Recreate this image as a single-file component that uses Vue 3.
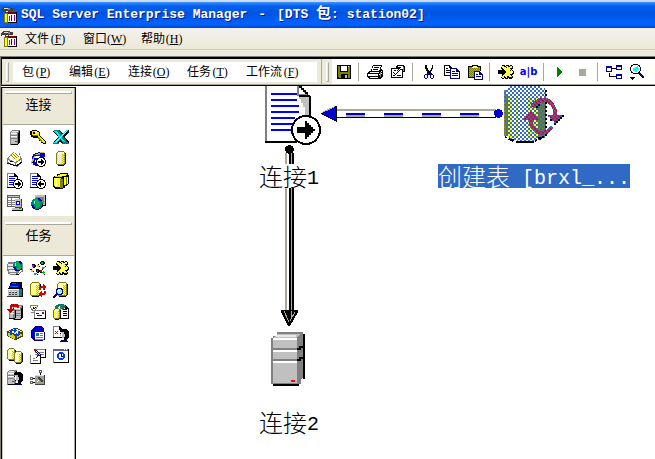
<script setup>
import { h } from 'vue'

// Layer helpers for the 16-unit pixel icons
const F = (fill, d) => ({ fill, d })
const S = (stroke, d, w = 1) => ({ fill: 'none', stroke, d, 'stroke-width': w })
const R = (fill, x, y, w, hh) => F(fill, `M${x} ${y}h${w}v${hh}h${-w}z`)

const dots = (c, x, y, w, hh) => {
  let d = ''
  for (let j = 0; j < hh; j++) for (let i = j % 2; i < w; i += 2) d += `M${x + i} ${y + j}h1v1h-1z`
  return F(c, d)
}
const cyl = (x, y, w, hh, pale) => [
  F('#808000', `M${x + 2} ${y}h${w - 4}v1h1v1h1v${hh - 4}h-1v1h-1v1h${4 - w}v-1h-1v-1h-1v${4 - hh}h1v-1h1z`),
  R(pale ? '#ffff80' : '#ffff00', x + 1, y + 2, w - 3, hh - 4),
  R('#ffffcc', x + 2, y + 1, w - 4, 2),
  dots('#ffffff', x + 2, y + 3, Math.floor(w / 2) - 2, hh - 5),
  dots('#c8b800', x + Math.floor(w / 2) + 1, y + 3, Math.floor(w / 2) - 2, hh - 5),
  S('#000', `M${x + w - 0.5} ${y + 2}v${hh - 4}M${x + 2} ${y + hh - 0.5}h${w - 4}M${x + w - 2} ${y + hh - 1.5}h1`),
]
const server = (x, y) => [
  F('#808080', `M${x + 2} ${y}h8v13h-1v1h-1v1h-8v-13h1v-1h1z`),
  R('#c0c0c0', x + 1, y + 2, 6, 12),
  R('#e8e8e8', x + 2, y + 1, 6, 1),
  F('#fff', `M${x + 1} ${y + 3}h6v1h-6zM${x + 1} ${y + 6}h6v1h-6z`),
  F('#808080', `M${x + 1} ${y + 5}h6v1h-6zM${x + 1} ${y + 8}h6v1h-6z`),
  F('#000', `M${x + 9} ${y + 1}h1v12h-1v1h-1v-11h1zM${x + 1} ${y + 14}h7v1h-7z`),
  R('#f00', x + 5, y + 11, 2, 1),
]
const page = (x, y, w = 10, hh = 14) => [
  F('#fff', `M${x} ${y}h${w - 3}l3 3v${hh - 3}h${-w}z`),
  F('#808080', `M${x} ${y}h${w - 3}v1h${4 - w}v${hh - 1}h-1z`),
  F('#000', `M${x + w - 4} ${y}h1v1h1v1h1v1h1v${hh - 3}h${-w}v-1h${w - 1}v${5 - hh}h-3z`),
]
const disc = (left) => [
  F('#000', 'M9 6h4v1h2v2h1v4h-1v2h-2v1h-4v-1h-2v-2h-1v-4h1v-2h2z'),
  F('#fff', 'M9 7h4v1h1v1h1v4h-1v1h-1v1h-4v-1h-1v-1h-1v-4h1v-1h1z'),
  F('#000', left ? 'M14 10h-3v-2h-1v1h-1v1h-1v2h1v1h1v1h1v-2h3z' : 'M8 10h3v-2h1v1h1v1h1v2h-1v1h-1v1h-1v-2h-3z'),
]
const textLines = S('#00f', 'M2 3.5h5M2 5.5h6M2 7.5h5M2 9.5h4M2 11.5h4')
const gear = [
  F('#000', 'M4 1h3v1h1v-1h3v1h1v-1h2v1h1v3h-1v1h1v1h1v3h-1v1h-1v1h1v2h-1v1h-3v-1h-1v1h-3v-1h-1v1h-2v-1h-1v-3h1v-6h-1v-3h1z'),
  F('#ffff40', 'M4 2h2v1h2v-1h2v1h2v-1h2v2h-1v2h1v1h1v2h-1v1h-1v2h1v1h-3v-1h-2v2h-1v-2h-2v2h-2v-1h-1v-2h1v-8h-1v-1h1z'),
  F('#fff', 'M7 4h1v1h-1zM9 4h1v1h-1zM11 5h1v1h-1zM10 7h1v1h-1zM12 8h1v1h-1zM11 10h1v1h-1zM9 11h1v1h-1zM7 12h1v1h-1z'),
  F('#000', 'M8 3h1v1h-1zM12 4h1v1h-1zM12 6h1v1h-1zM12 10h1v1h-1zM9 12h1v1h-1z'),
  F('#000', 'M0 6h4v-2h1v1h1v1h1v1h1v2h-1v1h-1v1h-1v1h-1v-2h-4z'),
]
const face = (x, y) => [
  F('#000', `M${x + 1} ${y}h5l3 2v6l-2 2v2h1v1h-7v-2l2-1v-1h-2v-2h-1v-2l1-2h-1v-2z`),
  F('#c0c0c0', `M${x + 1} ${y + 3}h3v2h1v3h-1v2h-2v-2h-1v-1h-1v-2h1z`),
  F('#fff', `M${x + 1} ${y + 4}h1v4h-1zM${x + 2} ${y + 9}h2v2h-2z`),
  F('#000080', `M${x + 1} ${y + 11}h5v1h2v1h-8v-1h1z`),
]
const globe = (x, y, r) => [
  F('#008080', `M${x - r} ${y}a${r} ${r} 0 1 0 ${2 * r} 0a${r} ${r} 0 1 0 ${-2 * r} 0`),
  F('#0000c0', `M${x - r} ${y + 1}h3l1 4h-2zM${x + 1} ${y - r}h2l2 3h-3z`),
  F('#00b050', `M${x - 2} ${y - r + 1}h3v2l2 1v3l-2 3h-2v-4l-2-2z`),
  F('#a0e0e0', `M${x - 3} ${y - 3}h1v3h-1z`),
  S('#000', `M${x + r - 0.5} ${y}q0 ${r - 1} ${-r} ${r - 0.5}`),
]

const icons = {
  server: server(3, 1),
  key: [
    F('#000', 'M2 1h5v1h2v1h1v4h1v1h1v1h1v1h1v1h1v1h1v3h-3v-1h-2v-2h-2v-2h-1v-1h-5v-1h-2v-2h-1v-4h1z'),
    F('#ffe800', 'M2 2h5v1h2v4h1v1h1v1h1v1h1v1h1v1h1v2h-2v-1h-1v-2h-2v-2h-2v-2h-4v-1h-2v-4h1z'),
    R('#000', 3, 3, 2, 2), F('#ffff99', 'M5 2h2v1h1v1h-3z'), F('#808000', 'M3 6h5v1h-5zM8 8h1v1h1v1h1v1h1v2h-1v-1h-1v-1h-1v-1h-1z'),
  ],
  excel: [
    F('#000', 'M1 1h6l3 4 3-4h3v2l-5 5 5 5v2h-7l-2-3-2 3h-5v-2l5-5-5-5z'),
    F('#008080', 'M1 1h5l9 13h-5z'),
    F('#00e8e8', 'M1 2h3l8 11h-2zM13 1h2l-11 13h-4v-1h2z'),
    F('#fff', 'M13 2h1l-11 11h-1z'), R('#008080', 0, 14, 6, 1), R('#008080', 9, 14, 7, 1),
  ],
  cards: [
    F('#808080', 'M2 5l4-4h6l3 7v4l-5 4-10-4v-5z'),
    F('#fff', 'M3 5l4-4h5l1 6-5 4-6-3z'), F('#ffff66', 'M4 4l3-2 3 4 3 1-3 3-5-2z'),
    S('#808080', 'M4 4l4 4M6 3l4 4M8 2l4 4M1 8l7 4'),
    F('#fff', 'M1 9l7 3v2l-7-3zM9 12l5-3v2l-5 4z'), R('#000', 3, 10, 3, 1),
    S('#000', 'M0 12l9 3 6-4'),
  ],
  ie: [
    F('#0000d0', 'M5 2h3v-1h6v1h1v4h-1v2h-2v6h-1v1h-6v-1h-2v-2h-1v-7h1v-2h2z'),
    F('#fff', 'M6 5h4v1h1v1h-6v-1h1zM5 9h4v3h-3v-1h-1z'), F('#00a0ff', 'M5 3h5v1h-5zM3 6h1v4h-1z'),
    F('#e0c000', 'M0 12h1v-2h1v-2h1v-1h1v-2h2v-2h2v-1h2v-1h4v1h-4v1h-2v1h-2v2h-1v1h-1v2h-1v2h-1v2h-1z'),
    ...disc(false),
  ],
  cylinder: cyl(3, 0, 10, 15),
  docOut: [...page(0, 0, 11, 15), textLines, ...disc(false)],
  docIn: [...page(0, 0, 11, 15), textLines, ...disc(true)],
  cylinders: [
    F('#000', 'M7 0h8v2h1v9h-1v1h-1v1h-2v2h-2v1h-8v-1h-1v-1h-1v-10h1v-1h3v-2h2z'),
    F('#ffff00', 'M7 1h7v1h-1v1h-8v-1h2zM1 5h7v9h-6v-1h-1zM11 4h4v7h-2v1h-2z'), F('#808000', 'M7 6h3v9h-3zM13 4h1v7h-1z'),
    F('#ffffcc', 'M2 5h2v8h-2zM8 2h4v1h-4z'), R('#e8d800', 2, 3, 7, 1),
  ],
  tablePc: [
    R('#606060', 0, 0, 13, 12), R('#fff', 1, 3, 11, 8), R('#c0c0c0', 1, 1, 11, 1),
    F('#808080', 'M1 5h11v1h-11zM1 7h11v1h-11zM1 9h11v1h-11zM4 3h1v8h-1z'),
    R('#404040', 8, 4, 7, 9), R('#c0c0c0', 8, 4, 6, 8), R('#00f', 9, 6, 4, 4), R('#fff', 10, 7, 2, 2),
    R('#c0c0c0', 5, 13, 10, 2), F('#000', 'M5 15h10v-2h1v3h-11z'), R('#0a0', 12, 13, 2, 1),
  ],
  webPc: [R('#000', 5, 0, 11, 11), R('#c0c0c0', 5, 0, 10, 10), R('#808080', 6, 2, 8, 7), ...globe(7, 9, 6)],
  ftp: [
    F('#808080', 'M1 2h9v3h3v6h-1v2h-1v2h-8v-1h-2v-3h-1v-7h1z'),
    F('#e8e8e8', 'M1 4h7v2h-7zM1 7h8v2h-8zM2 10h7v2h-7zM3 13h6v1h-6z'), ...globe(11, 6, 5),
    S('#808080', 'M15.5 3v8l-5 4'), R('#000', 9, 14, 3, 1),
  ],
  scatter: [
    F('#000', 'M11 1h3v1h1v2h-1v1h-3v-1h-1v-2h1zM2 4h3v1h1v2h-1v1h-2v-1h-1zM6 9h3v1h1v2h-1v1h-2v-1h-1z'),
    F('#0b0', 'M11 2h2v2h-2zM13 11h1v1h1v1h-1v1h-1v-1h-1v-1h1z'), F('#c0f', 'M2 5h2v2h-2zM7 10h1v2h-1z'),
    F('#e0d800', 'M7 5h2v2h-2zM1 10h2v2h-2z'), F('#00a0a0', 'M12 7h3v1h-1v1h-2zM4 13h3v1h-1v1h-2z'), F('#c00', 'M10 10h2v2h-2z'),
    F('#000', 'M8 4h1v1h-1zM9 6h1v1h-1zM15 6h1v1h-1zM0 9h2v1h-2zM3 11h1v1h-1zM12 9h1v1h-1zM7 14h1v1h-1zM14 14h1v1h-1zM10 12h2v1h-2z'),
  ],
  gear,
  calc: [
    F('#000', 'M4 0h11v6h1v9h-15v-9h1z'), F('#0000c0', 'M4 1h10l-2 5h-10z'), F('#0060ff', 'M5 1h4v1h-4zM3 4h8v1h-8z'),
    R('#c0c0c0', 1, 7, 11, 7), F('#fff', 'M1 7h11v1h-11zM2 9h1v1h-1zM5 9h1v1h-1zM8 9h1v1h-1z'),
    F('#404040', 'M2 10h2v1h-2zM5 10h2v1h-2zM8 10h2v1h-2zM2 12h2v1h-2zM5 12h2v1h-2zM8 12h2v1h-2zM0 14h12v1h-12z'),
    R('#008080', 12, 7, 3, 7),
  ],
  cylLoop: [
    ...cyl(0, 0, 11, 15, true), F('#fff', 'M9 6h5v7h-5z'),
    F('#e00000', 'M9 5h2v-1h2v-2h1v1h1v1h1v2h-1v1h-1v1h-1v-2h-2v2h-2zM15 9h-1v2h-2v-2h-1v1h-1v1h-1v2h1v1h1v1h1v-2h3v-1h1v-3z'),
    F('#400', 'M14 7h1v1h-1zM9 13h1v1h-1z'),
  ],
  cylFind: [
    ...cyl(4, 0, 11, 15, true), F('#000080', 'M4 6h4l2 2v3l-2 2h-3l-4 3h-1v-2l3-3v-4z'),
    F('#80ffff', 'M5 7h2l2 2v1l-2 2h-2l-1-2v-2z'), R('#fff', 5, 8, 2, 1), R('#00f', 1, 13, 2, 1),
  ],
  serverMove: [
    ...server(6, 1).slice(0, 6), F('#808080', 'M2 5h6v10h-5l-1-2z'), R('#c0c0c0', 3, 6, 3, 8),
    S('#fff', 'M3 7.5h4M3 9.5h4'), S('#000', 'M2 14.5h6M8.5 6v8'), R('#c0c0c0', 9, 7, 5, 6), S('#808080', 'M9 9.5h5M9 11.5h5'),
    F('#c00', 'M3 1l2-1h5l2 2v2h-2l-1-1h-4v2h2l-4 4-3-4h3v-2z'), F('#600', 'M6 4h1l-4 4v-1z'),
  ],
  mail: [
    F('#808080', 'M0 1h8v2h-1v2h-1v2h-4v-1h-1v-2h-1z'), F('#ffffcc', 'M1 2h6v1h-1v2h-1v1h-2v-1h-1v-1h-1z'), F('#000', 'M3 3h1v1h1v-1h1v1h-1v1h-2z'),
    R('#000', 4, 7, 12, 8), R('#fff', 4, 7, 11, 7), F('#808080', 'M4 6h12v1h-11v7h-1z'),
    S('#00f', 'M6 9.5h3M7 11.5h5'), R('#c00', 12, 8, 2, 2), S('#808080', 'M1 8.5h3'),
  ],
  cylDoc: [
    ...page(7, 1, 9, 14), S('#000', 'M10 5.5h4M10 7.5h4M10 9.5h4M10 11.5h4'), ...cyl(0, 4, 8, 12),
    F('#008060', 'M3 1l3-1h5v2h2l-3 4-4-3h2v-1h-2l-3 3h-1v-2z'),
  ],
  boxLoop: [
    F('#404000', 'M6 2h5v1h2v1h2v1h1v6h-2v1h-2v1h-2v1h-3v-1h-2v-1h-2v-1h-2v-1h-1v-5h2v-1h2v-1h2z'),
    F('#ffff66', 'M6 3h5v1h2v1h2v1h-2v1h-2v1h-4v-1h-3v-1h-2v-1h2v-1h2z'), F('#e0d000', 'M1 7h2v1h3v1h2v4h-2v-1h-2v-1h-2v-1h-1zM9 9h3v-1h3v2h-2v1h-2v1h-2z'),
    dots('#fff', 4, 4, 9, 3),
    F('#0040ff', 'M3 9v-4h1v-1h3v-2h1v1h1v1h1v1h-1v1h-1v1h-1v-2h-2v4zM13 5v4h-1v1h-2v2h-1v-1h-1v-1h-1v-1h1v-1h1v-1h1v1h1v-3z'),
  ],
  blueHead: [
    F('#000080', 'M2 3l3-3h6l3 3v3h1v8h-2v1h-9l-3-4v-5z'), F('#0000d0', 'M3 3l3-2h5l2 2v2h-8v6h-3v-5z'),
    R('#fff', 5, 6, 9, 7), R('#008080', 6, 7, 3, 3), S('#00a0ff', 'M10 7.5h3M10 9.5h3M6 11.5h7'), S('#808080', 'M5 13.5h9'),
  ],
  docFace: [...page(0, 0, 10, 12), F('#c00', 'M2 5h1v1h1v-1h1v1h-1v1h1v1h-1v-1h-1v1h-1v-1h1v-1h-1z'), ...face(7, 3)],
  twoCyl: [...cyl(0, 0, 9, 13, true), ...cyl(7, 3, 9, 13, true)],
  notepad: [
    R('#000', 4, 1, 12, 9), R('#fff', 4, 1, 11, 8), F('#808080', 'M4 1h11v1h-11zM5 4h9v1h-9zM5 6h9v1h-9z'),
    R('#000', 1, 7, 10, 9), R('#fff', 1, 7, 9, 8), F('#808080', 'M0 7h1v9h-1zM3 10h2v1h-2zM3 12h5v1h-5z'),
    S('#000', 'M5 2l6 6', 2), S('#ffe000', 'M6 3l4 4', 1.4), F('#c00', 'M4 1h2v2h-2z'), S('#00f', 'M6 10l4-5'),
  ],
  schedule: [
    R('#000', 0, 1, 16, 14), R('#fff', 1, 3, 14, 11), R('#606090', 0, 1, 15, 2), F('#fff', 'M11 1h1v1h-1zM13 1h1v1h-1z'),
    F('#808080', 'M0 3h1v12h-1z'), F('#0040e0', 'M6 4h4v1h1v1h1v4h-1v1h-1v1h-4v-1h-1v-1h-1v-4h1v-1h1z'), F('#fff', 'M6 6h4v4h-4z'), F('#0000c0', 'M8 6h1v2h1v1h-2z'),
  ],
  serverFace: [...server(0, 0), S('#808080', 'M8 0v14', 2), ...face(7, 2)],
  process: [
    R('#404040', 5, 5, 10, 10), R('#a0a088', 5, 5, 9, 9), R('#e0e0d0', 5, 5, 9, 1), F('#404040', 'M8 7h2v1h1v1h1v1h1v2h-2v-1h-1v-1h-1v-1h-1z'), S('#fff', 'M7 12l2-2'),
    S('#000', 'M10.5 2v3M1 8.5h4M1 12.5h4'), F('#606060', 'M9 0h3v3h-3zM0 7h3v3h-3zM0 11h3v3h-3z'), F('#fff', 'M10 1h1v1h-1zM1 8h1v1h-1zM1 12h1v1h-1z'),
  ],
  save: [
    R('#000', 1, 1, 14, 14), F('#808000', 'M2 2h2v6h8v-6h2v12h-2v-4h-7v4h-2l-1-1z'), R('#fff', 5, 2, 6, 5), R('#c0c0c0', 9, 11, 2, 3), R('#fff', 12, 2, 1, 1),
  ],
  print: [
    F('#000', 'M6 1h9v1l-1 3h1v1h1v6l-3 3h-11l-2-2v-4l2-2h2z'), F('#fff', 'M6 2h8l-2 5h-7z'),
    S('#000', 'M7 3.5h5M6 5.5h5'), F('#fff', 'M3 8h9l-1 1h-9zM1 10h10v2h-10zM3 13h8v1h-8z'), F('#808080', 'M13 8h1v5h-1z'), R('#ff0', 8, 11, 2, 1),
    F('#fff', 'M14 7h1v1h-1zM12 10h1v1h-1zM14 9h1v1h-1z'),
  ],
  props: [
    R('#000', 1, 4, 12, 10), R('#fff', 2, 5, 10, 8), F('#000', 'M3 8h1v1h1v1h1v-1h1v-1h1v1h-1v1h-1v1h-1v-1h-1v-1h-1zM4 6h2v1h-2zM7 11h4v1h-4zM3 11h2v1h-2z'),
    F('#000', 'M7 1h7l1 2v5h-2v-2h-2l-3 2-1-2 2-2h-3v-2z'), F('#fff', 'M8 2h4l1 1v2h-3l-2 2v-1l3-3h-4z'), F('#808080', 'M13 3h1v4h-1z'),
  ],
  cut: [
    F('#000', 'M5 1h1v3h1v2h1v1h1v-1h1v-2h1v-3h1v4h-1v2h-1v2h-1v1h-2v-1h-1v-2h-1v-2h-1v-4z'),
    F('#000080', 'M6 9h2v1h1v-1h2v1h1v1h1v3h-1v1h-2v-1h-1v-3h-2v3h-1v1h-2v-1h-1v-3h1v-1h2zM4 11v3h2v-3zM10 11v3h2v-3z'),
  ].map((l) => ({ ...l, 'fill-rule': 'evenodd' })),
  copy: [
    F('#fff', 'M0 1h6l3 3v8h-9z'), F('#000', 'M0 1h6v1h1v1h1v1h-3v-2h-4v9h5v1h-6zM2 4h2v1h-2zM2 6h4v1h-4zM2 8h4v1h-4z'),
    F('#fff', 'M6 4h6l4 4v7h-10z'), F('#000080', 'M6 4h7v1h1v1h1v1h1v8h-10zM7 5v9h8v-6h-3v-3zM8 7h3v1h-3zM8 9h6v1h-6zM8 11h6v1h-6z'),
  ].map((l) => ({ ...l, 'fill-rule': 'evenodd' })),
  paste: [
    F('#000', 'M1 2h4v-1h6v1h3v12h-13z'), R('#808000', 2, 3, 11, 10), dots('#a8a868', 2, 4, 11, 9), F('#ffff80', 'M5 3h1v-1h4v1h1v1h-6z'),
    F('#fff', 'M7 7h6l3 3v6h-9z'), F('#000080', 'M7 7h6v1h1v1h1v1h1v6h-9zM8 8v7h7v-4h-3v-3zM9 10h2v1h-2zM9 12h5v1h-5z'),
  ].map((l) => ({ ...l, 'fill-rule': 'evenodd' })),
  play: [F('#008000', 'M5 3h1v1h1v1h1v1h1v1h1v2h-1v1h-1v1h-1v1h-1v1h-1z')],
  stop: [R('#aca899', 4, 5, 7, 7)],
  layout: [
    F('#0000a0', 'M0 2h6v6h-6zM1 4v3h4v-3zM10 1h6v5h-6zM11 3v2h4v-2zM10 10h6v5h-6zM11 12v2h4v-2z'),
    F('#000', 'M6 4h4v1h-4zM3 9h1v3h6v1h-7z'),
  ].map((l) => ({ ...l, 'fill-rule': 'evenodd' })),
  magnify: [
    S('#000080', 'M10 9l5 5', 2), F('#000', 'M4 0h5v1h2v2h1v4h-1v2h-2v1h-5v-1h-2v-2h-1v-4h1v-2h2z'), F('#fff', 'M4 1h5v1h1v1h1v4h-1v1h-1v1h-5v-1h-1v-1h-1v-4h1v-1h1z'),
    F('#00ffff', 'M4 4h2v-1h2v-1h1v2h1v2h-2v2h-2v-1h-2z'), F('#000', 'M1 13h5v1h-1v1h-1v1h-1v-1h-1v-1h-1z'),
  ],
  app: [
    F('#404040', 'M2 0h7v1h3v3h-4v2h-4v-2h-3l-1 1v-3z'), F('#e0e0e0', 'M3 1h6v1h-7v1h-1zM5 4h2v1h-2z'),
    F('#808080', 'M7 1h2v2h-2z'), R('#808000', 3, 6, 4, 10), R('#ffff00', 4, 7, 2, 8),
    R('#000', 7, 5, 9, 11), R('#800000', 7, 5, 8, 2), R('#fff', 7, 7, 8, 8), F('#f00', 'M8 9h1v5h-1z'), F('#00f', 'M10 8h1v6h-1z'), F('#808', 'M13 8h1v6h-1z'),
  ],
}

const PixelIcon = (props) =>
  h('svg', { viewBox: '0 0 16 16', width: 16, height: 16, 'shape-rendering': 'crispEdges', 'aria-hidden': 'true' },
    icons[props.name].map((layer) => h('path', layer)))
PixelIcon.props = ['name']

const mainMenu = [['文件', 'F'], ['窗口', 'W'], ['帮助', 'H']]
const packageMenu = [['包', 'P'], ['编辑', 'E'], ['连接', 'O'], ['任务', 'T'], ['工作流', 'F']]
const toolGroups = [['save'], ['print', 'props'], ['cut', 'copy', 'paste'], ['gear', 'alb'], ['play', 'stop'], ['layout', 'magnify']]
const palettes = [
  { title: '连接', items: ['server', 'key', 'excel', 'cards', 'ie', 'cylinder', 'docOut', 'docIn', 'cylinders', 'tablePc', 'webPc'] },
  { title: '任务', items: ['ftp', 'scatter', 'gear', 'calc', 'cylLoop', 'cylFind', 'serverMove', 'mail', 'cylDoc', 'boxLoop', 'blueHead', 'docFace', 'twoCyl', 'notepad', 'schedule', 'serverFace', 'process'] },
]
</script>

<template>
  <div class="window">
    <header class="title-bar">
      <PixelIcon name="app" />
      <h1 class="title"><span>SQL Server Enterprise Manager</span><span>-</span><span>[DTS <span class="han">包</span>: station02]</span></h1>
    </header>
    <nav class="main-menu">
      <PixelIcon name="app" />
      <button v-for="[label, key] in mainMenu" :key="key" class="menu-item">{{ label }}<span class="accel">(<u>{{ key }}</u>)</span></button>
    </nav>

    <div class="child">
      <div class="tool-row">
        <nav class="package-menu">
          <i class="grip"></i>
          <div class="package-items">
            <button v-for="[label, key] in packageMenu" :key="label" class="menu-item">{{ label }}<span class="accel">(<u>{{ key }}</u>)</span></button>
          </div>
        </nav>
        <div class="grip-area"><i class="grip"></i></div>
        <div class="tools">
          <div v-for="(group, i) in toolGroups" :key="i" class="tool-group">
            <button v-for="name in group" :key="name" class="tool">
              <span v-if="name === 'alb'" class="alb">a|b</span>
              <PixelIcon v-else :name="name" />
            </button>
          </div>
        </div>
      </div>

      <div class="workspace">
        <aside class="palette">
          <section v-for="p in palettes" :key="p.title">
            <div class="palette-head"><i class="bar"></i><h2>{{ p.title }}</h2></div>
            <div class="palette-grid">
              <button v-for="name in p.items" :key="name" class="tool"><PixelIcon :name="name" /></button>
            </div>
          </section>
        </aside>

        <main class="canvas">
          <svg class="diagram" width="560" height="310" viewBox="77 86 560 310" shape-rendering="crispEdges" aria-hidden="true">
            <defs>
              <pattern id="check" width="4" height="4" patternUnits="userSpaceOnUse">
                <path fill="#316ac5" d="M0 0h2v2h-2zM2 2h2v2h-2z" />
              </pattern>
              <pattern id="check-red" width="4" height="4" patternUnits="userSpaceOnUse">
                <path fill="#f00010" d="M0 0h4v4h-4z" />
                <path fill="#316ac5" d="M0 0h2v2h-2zM2 2h2v2h-2z" />
              </pattern>
            </defs>
            <!-- success path, vertical -->
            <path fill="#aca899" d="M285 153h2v160h-2zM291 153h1v160h-1z" />
            <path fill="#000" d="M289 153h2v160h-2zM292 153h2v160h-2z" />
            <path fill="#000" d="M281 310h17v2l-8 14h-2l-7-14z" />
            <path fill="none" stroke="#aca899" d="M284 311l5 11M291 311v6M295 312l-5 9" />
            <circle cx="289.500" cy="149.500" r="4.500" />
            <!-- dashed path, horizontal -->
            <path fill="#aca899" d="M336 109h160v2h-160z" />
            <path fill="#000" d="M336 117h160v1h-160z" />
            <path stroke="#00c" stroke-width="2" stroke-dasharray="19 19" d="M346 114h150" />
            <path stroke="#aca899" stroke-width="2" stroke-dasharray="19 19" d="M346 116h150" />
            <path fill="#00c" d="M321 113l15-7v15z" />
            <path fill="none" stroke="#000" d="M321 113.500l15 7.500v-15" />
            <path fill="none" stroke="#aca899" d="M322 112.500l13-6" />
            <circle cx="498.500" cy="113.500" r="4.500" fill="#00c" />
            <!-- text document -->
            <path fill="#fff" d="M266 82h32l12 15v45h-44z" />
            <path fill="#808080" d="M265 82h2v59h-2zM297 82h2v14h-2z" />
            <path fill="#c0c0c0" d="M299 97h10v19h-6z" />
            <path fill="#fff" d="M298 99h3v4h2v4h2v10h-7z" />
            <path fill="#808080" d="M299 86l9 10h-9z" />
            <path fill="#fff" d="M299 88l2 0 4 6h-6z" />
            <path fill="#000" d="M299 86h3v2h2v2h2v2h2v3h2v2h-11v-2h8v-1h-2v-2h-2v-2h-2v-2h-2zM309 96h2v22h-2zM265 141h32v2h-32z" />
            <path stroke="#00f" stroke-width="2" d="M271 94h26M271 100h26M271 106h28M271 112h28M271 118h24M271 124h21M271 130h20" />
            <circle cx="306" cy="130" r="14" fill="#fff" stroke="#000" stroke-width="2" />
            <path fill="#000" d="M297 127h8v-6h2v2h2v2h2v2h2v2h2v2h-2v2h-2v2h-2v2h-2v2h-2v-6h-8z" />
            <!-- selected cylinder -->
            <path fill="#fff" d="M506 88l4-2h30l5 2v50l-5 3-12 1-14-1-9-5v-48z" />
            <path fill="#ff0" d="M508 97h10v41h-10zM528 97h11v41h-11z" />
            <path fill="#fff" d="M512 96h4v40h-4zM532 96h2v40h-2z" />
            <path fill="#808000" d="M504 94h4v42h-4zM538 98h7v40h-7z" />
            <path fill="url(#check)" d="M504 90h2v-2h4v-2h31v2h4v2h2v46h-2v2h-4v2h-6v2h-18v-2h-8v-4h-3z" />
            <path fill="none" stroke="#000" stroke-width="2" stroke-dasharray="2 2" d="M546 90v47M505 137l8 4M535 141l11-5" />
            <path fill="#000" d="M516 141h18v2h-18zM510 139h4v2h-4zM538 137h4v2h-4z" />
            <path fill="none" stroke="#808080" stroke-width="2" stroke-dasharray="2 2" d="M505 90v46" />
            <path fill="none" stroke="url(#check-red)" stroke-width="4" d="M532 107l4-5 6-2h5l5 4 3 6v6M552 127l-5 5-8 1-5-4-3-5v-7" />
            <path fill="url(#check-red)" d="M524 118h2v-2h2v-2h2v-2h3v2h2v2h2v2h2v2h-15zM548 115h14v2h-2v2h-2v2h-2v2h-2v-2h-2v-2h-2v-2h-2z" />
            <path fill="#000" d="M562 115h2v2h-2zM560 117h2v2h-2zM558 119h2v2h-2zM556 121h2v2h-2zM554 123h2v2h-2zM550 119h2v2h-2zM536 106h2v-2h2v2h-2v2h-2z" />
            <!-- server -->
            <path fill="#808080" d="M277 332h26v2h-2v50h-30v-46h2v-2h4z" />
            <path fill="#c0c0c0" d="M277 334h23l-4 4h-22zM273 340h24v43h-24z" />
            <path fill="#e8e8e8" d="M276 335h20v2h-20z" />
            <path fill="#808080" d="M297 339l4-5h2v44l-6 5z" />
            <path fill="#fff" d="M273 338h24v2h-24zM273 350h24v2h-24zM273 361h24v2h-24z" />
            <path fill="#808080" d="M273 348h24v2h-24zM273 359h24v2h-24z" />
            <path fill="#000" d="M303 334h2v45h-2v2h-2v2h-2v3h-26v-2h26v-1h2v-2h2zM297 348h2v-2h4v2h-2v2h-4zM297 359h2v-2h4v2h-2v2h-4z" />
            <path fill="#f00" d="M291 380h4v2h-4z" />
          </svg>
          <span class="node-label source">连接<span class="latin">1</span></span>
          <span class="node-label target">连接<span class="latin">2</span></span>
          <span class="node-label task">创建表<span class="latin">&nbsp;[brxl_...</span></span>
        </main>
      </div>
    </div>
  </div>
</template>

<style>
body { margin: 0; }
</style>

<style scoped>
.window {
  min-height: 100vh;
  display: flex;
  flex-direction: column;
  background: #ece9d8;
  color: #000;
  font: 12px/16px "Liberation Serif", "Noto Sans CJK SC", serif;
  overflow: hidden;
}
button {
  border: 0;
  padding: 0;
  margin: 0;
  background: none;
  color: inherit;
  font: inherit;
}
svg { display: block; flex: none; }
h1, h2 { margin: 0; font-weight: 400; }

.title-bar {
  box-sizing: border-box;
  height: 28px;
  border-top: 2px solid #cdd9f0;
  display: flex;
  align-items: center;
  padding-left: 1px;
  gap: 4px;
  background: linear-gradient(#3c96ff, #0560f0 15%, #0054e0 45%, #0060fa 75%, #0062ff 88%, #0040c0);
}
.title {
  display: flex;
  gap: 11px;
  white-space: nowrap;
  font: bold 13px/20px "Liberation Mono", "Noto Sans CJK SC", monospace;
  color: #fff;
  text-shadow: 1px 1px #0a1883;
}
.han { font-size: 15px; line-height: 16px; }

.main-menu {
  height: 21px;
  display: flex;
  align-items: center;
  padding-left: 1px;
  background: linear-gradient(#f2f1ed, #ece9d8);
  border-bottom: 1px solid #d0cdbd;
}
.main-menu .menu-item { margin: 0 8px; }
.menu-item { white-space: nowrap; display: flex; }
.accel { width: 18px; text-align: center; }

.child {
  flex: 1;
  display: flex;
  flex-direction: column;
  margin-top: 6px;
  border-top: 1px solid #808074;
  border-left: 1px solid #808074;
}
.tool-row {
  display: flex;
  height: 25px;
  border-top: 2px solid #000;
  border-left: 1px solid #000;
  border-bottom: 1px solid #aca899;
  background: #fff;
}
.package-menu {
  display: flex;
  align-items: center;
  padding: 0 4px;
  gap: 4px;
  background: #ece9d8;
  border-right: 1px solid #aca899;
}
.package-items {
  display: flex;
  gap: 17px;
  padding: 2px 17px 2px 9px;
  background: #fff;
}
.grip {
  width: 1px;
  height: 18px;
  border: 1px solid #aca899;
  border-left-color: #fff;
  border-top-color: #fff;
}
.grip-area { width: 10px; display: flex; align-items: center; justify-content: center; background: #ece9d8; }
.tools { display: flex; }
.tool-group { display: flex; align-items: center; }
.tool-group + .tool-group::before {
  content: "";
  width: 1px;
  height: 18px;
  margin: 0 4px 0 3px;
  background: #aca899;
}
.tool { width: 23px; height: 22px; display: flex; align-items: center; justify-content: center; }
.alb { color: #00f; font: bold 10px/16px "DejaVu Sans", sans-serif; }

.workspace { flex: 1; display: flex; border-top: 1px solid #000; background: #fff; }
.palette {
  width: 73px;
  flex: none;
  display: flex;
  flex-direction: column;
  margin-top: 1px;
  border: 1px solid #000;
  border-bottom: 0;
}
.palette section { border-left: 1px solid #c8c5b4; border-right: 1px solid #aca899; }
.palette section:last-child { flex: 1; }
.palette-head {
  height: 36px;
  display: flex;
  flex-direction: column;
  align-items: center;
  gap: 2px;
  background: #ece9d8;
  border-bottom: 1px solid #aca899;
}
.bar {
  align-self: stretch;
  height: 1px;
  margin: 3px 2px 0;
  border: 1px solid #aca899;
  border-top-color: #fff;
  border-left-color: #fff;
  background: #fff;
}
.palette h2 { font: 13px/16px "Noto Sans CJK SC", sans-serif; }
.palette-grid {
  display: grid;
  grid-template-columns: repeat(3, 23px);
  padding: 1px 0 2px;
}
.palette section + section .palette-head { height: 40px; box-sizing: border-box; }
.palette section + section .bar { margin-top: 6px; }

.canvas { flex: 1; position: relative; overflow: hidden; border-left: 1px solid #fff; }
.diagram { position: absolute; left: 0; top: 0; }
.node-label {
  position: absolute;
  white-space: pre;
  font: 300 24px/24px "Noto Sans CJK SC", sans-serif;
  background: #fff;
  height: 24px;
}
.latin { font: 20px/16px "Liberation Mono", monospace; vertical-align: 2px; }
.source { left: 182px; top: 78px; }
.target { left: 182px; top: 324px; }
.task { left: 361px; top: 78px; background: #316ac5; color: #fff; }
</style>
